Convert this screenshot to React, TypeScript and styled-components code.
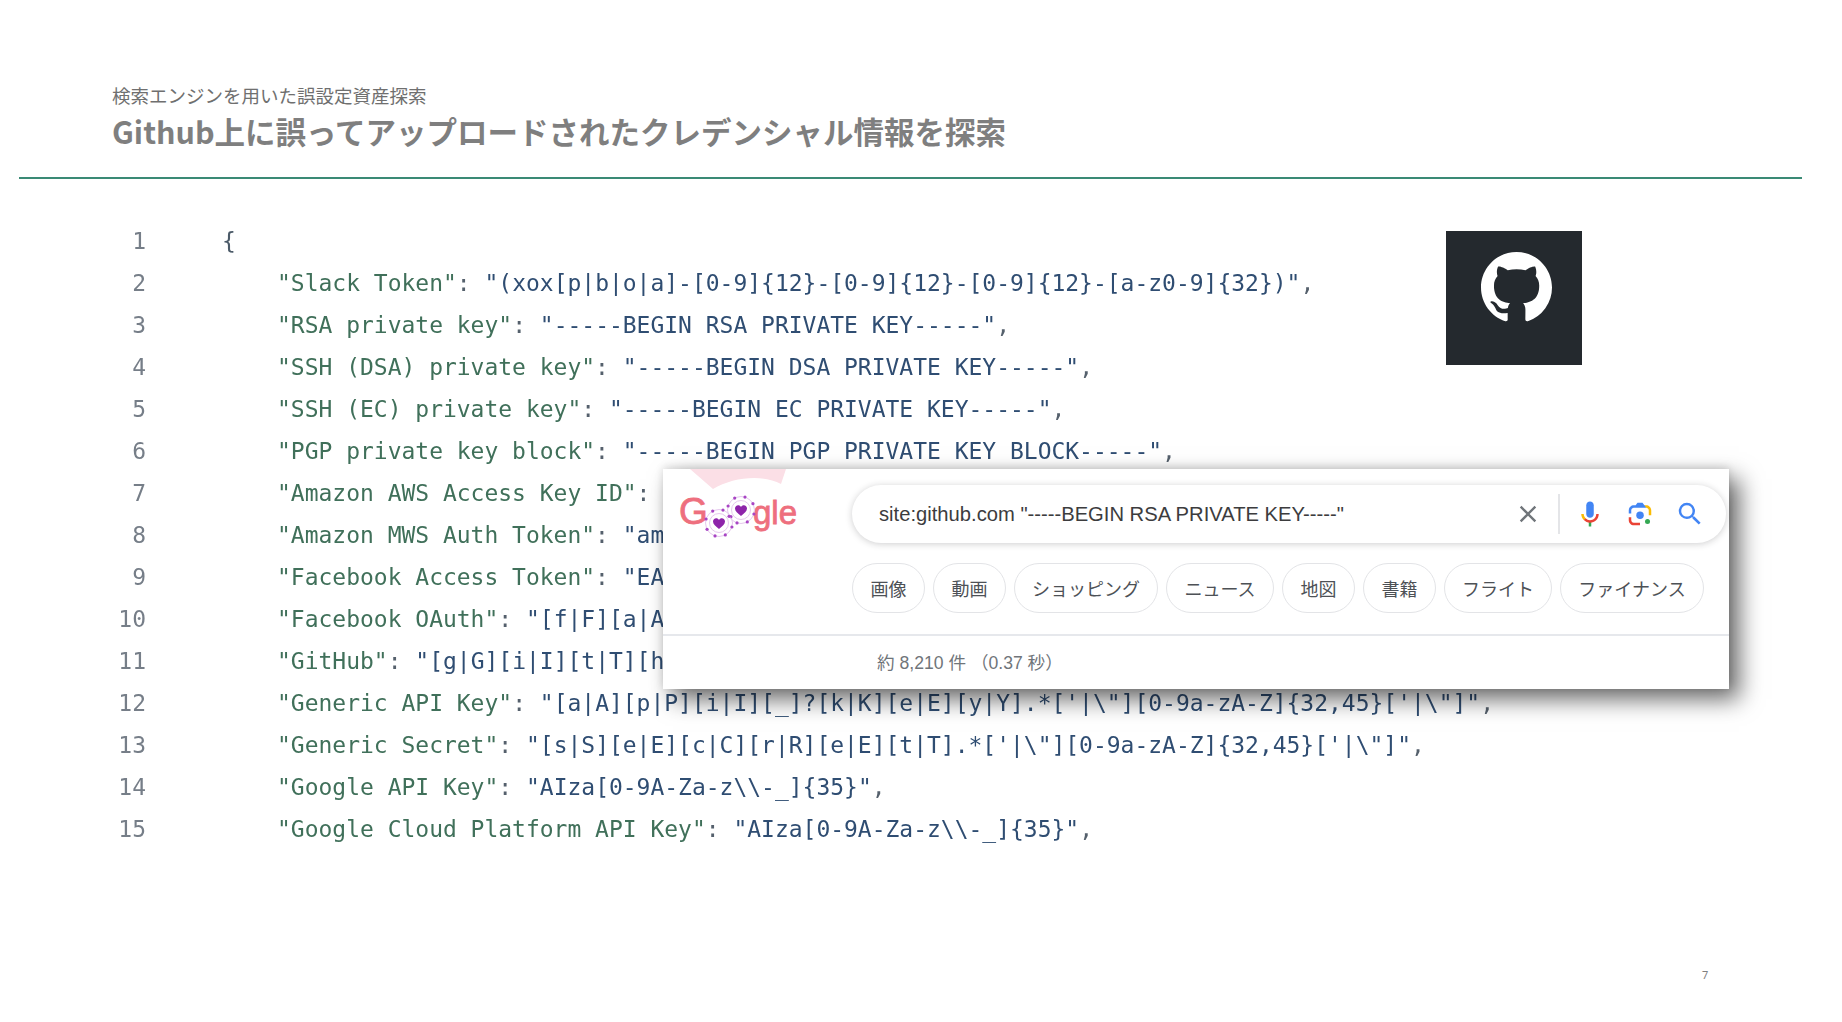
import React from "react";
import styled, { createGlobalStyle } from "styled-components";

const GlobalStyle = createGlobalStyle`
  html, body { margin: 0; padding: 0; background: #fff; }
  body { width: 1842px; height: 1022px; overflow: hidden; font-family: "Noto Sans CJK JP", "Noto Sans", sans-serif; }
`;

const Slide = styled.div`
  position: relative;
  width: 1842px;
  height: 1022px;
  background: #fff;
  overflow: hidden;
`;

const Header = styled.header`
  margin: 0 40px 0 19px;
  padding: 81px 0 0 93px;
  height: 96px;
  border-bottom: 2px solid #3a8a75;
`;

const Subtitle = styled.div`
  font-size: 18.5px;
  line-height: 28px;
  color: #6f6f6f;
  font-family: "Noto Sans CJK JP", sans-serif;
`;

const Title = styled.h1`
  margin: 0;
  font-size: 30.5px;
  line-height: 44px;
  font-weight: 700;
  color: #7f7f7f;
  font-family: "Noto Sans CJK JP", sans-serif;
`;

const CodeList = styled.div`
  margin-top: 41px;
  display: flex;
  flex-direction: column;
  filter: blur(0.35px);
`;

const CodeRow = styled.div`
  display: flex;
  height: 42px;
  align-items: center;
  font-family: "DejaVu Sans Mono", monospace;
  font-size: 22.98px;
  white-space: pre;
`;

const LineNo = styled.span`
  width: 146px;
  flex: none;
  text-align: right;
  color: #767e88;
`;

const CodeText = styled.span<{ $indent: number }>`
  margin-left: ${(p) => p.$indent}px;
  color: #4b5a68;
`;

const Key = styled.span`
  color: #40705a;
`;

const Punct = styled.span`
  color: #55606c;
`;

const Str = styled.span`
  color: #2f4d72;
`;

const GithubTile = styled.div`
  position: absolute;
  left: 1446px;
  top: 231px;
  width: 136px;
  height: 134px;
  background: #24292e;
  display: flex;
  justify-content: center;
  padding-top: 21px;
  box-sizing: border-box;
`;

const GithubSvg = styled.svg`
  width: 71px;
  height: 71px;
  fill: #fff;
  margin-left: 4px;
`;

const GooglePanel = styled.section`
  position: absolute;
  left: 663px;
  top: 469px;
  width: 1066px;
  height: 220px;
  background: #fff;
  box-shadow: 10px 10px 22px rgba(0, 0, 0, 0.6), 0 -2px 8px rgba(0, 0, 0, 0.12);
  display: flex;
  flex-direction: column;
`;

const TopArea = styled.div`
  position: relative;
  height: 167px;
  padding: 16px 3px 0 189px;
  box-sizing: border-box;
  border-bottom: 2px solid #e6e8ec;
  flex: none;
`;

const LogoSvg = styled.svg`
  position: absolute;
  left: 0;
  top: 0;
  width: 140px;
  height: 80px;
`;

const SearchBox = styled.div`
  height: 58px;
  border-radius: 29px;
  box-shadow: 0 1px 7px rgba(32, 33, 36, 0.22);
  display: flex;
  align-items: center;
  padding-left: 27px;
  background: #fff;
`;

const Query = styled.div`
  flex: 1;
  font-family: "Liberation Sans", Arial, sans-serif;
  font-size: 20.2px;
  color: #3c3c3e;
  white-space: pre;
`;

const IconSlot = styled.div<{ $w: number }>`
  width: ${(p) => p.$w}px;
  display: flex;
  justify-content: center;
  align-items: center;
  flex: none;
`;

const Separator = styled.div`
  width: 2px;
  height: 40px;
  background: #e4e5e8;
  flex: none;
  margin: 0 10px 0 0;
`;

const ChipRow = styled.div`
  display: flex;
  gap: 8px;
  margin-top: 20px;
`;

const Chip = styled.div<{ $w: number }>`
  width: ${(p) => p.$w}px;
  height: 50px;
  box-sizing: border-box;
  border: 1.5px solid #e3e4e7;
  border-radius: 25px;
  display: flex;
  align-items: center;
  justify-content: center;
  font-size: 18px;
  color: #4d5156;
  font-family: "Noto Sans CJK JP", sans-serif;
  white-space: nowrap;
`;

const ResultStats = styled.div`
  padding-left: 214px;
  margin-top: 14px;
  font-size: 17.6px;
  line-height: 26px;
  color: #70757a;
  font-family: "Liberation Sans", "Noto Sans CJK JP", sans-serif;
`;

const PageNo = styled.div`
  position: absolute;
  left: 1702px;
  top: 967px;
  font-size: 11px;
  line-height: 16px;
  color: #7f7f7f;
  font-family: "Noto Sans", sans-serif;
`;

const rows: [string, string][] = [
  ["Slack Token", `(xox[p|b|o|a]-[0-9]{12}-[0-9]{12}-[0-9]{12}-[a-z0-9]{32})`],
  ["RSA private key", `-----BEGIN RSA PRIVATE KEY-----`],
  ["SSH (DSA) private key", `-----BEGIN DSA PRIVATE KEY-----`],
  ["SSH (EC) private key", `-----BEGIN EC PRIVATE KEY-----`],
  ["PGP private key block", `-----BEGIN PGP PRIVATE KEY BLOCK-----`],
  ["Amazon AWS Access Key ID", `AKIA[0-9A-Z]{16}`],
  ["Amazon MWS Auth Token", `amzn\\.mws\\.[0-9a-f]{8}-[0-9a-f]{4}`],
  ["Facebook Access Token", `EAACEdEose0cBA[0-9A-Za-z]+`],
  ["Facebook OAuth", `[f|F][a|A][c|C][e|E][b|B][o|O][o|O][k|K].*['|\\"][0-9a-f]{32}['|\\"]`],
  ["GitHub", `[g|G][i|I][t|T][h|H][u|U][b|B].*['|\\"][0-9a-zA-Z]{35,40}['|\\"]`],
  ["Generic API Key", `[a|A][p|P][i|I][_]?[k|K][e|E][y|Y].*['|\\"][0-9a-zA-Z]{32,45}['|\\"]`],
  ["Generic Secret", `[s|S][e|E][c|C][r|R][e|E][t|T].*['|\\"][0-9a-zA-Z]{32,45}['|\\"]`],
  ["Google API Key", `AIza[0-9A-Za-z\\\\-_]{35}`],
  ["Google Cloud Platform API Key", `AIza[0-9A-Za-z\\\\-_]{35}`],
];

const chips: [string, number][] = [
  ["画像", 73],
  ["動画", 73],
  ["ショッピング", 144],
  ["ニュース", 108],
  ["地図", 73],
  ["書籍", 73],
  ["フライト", 108],
  ["ファイナンス", 144],
];

const Heart = ({ cx, cy }: { cx: number; cy: number }) => {
  const dots = Array.from({ length: 8 }, (_, i) => {
    const a = (i * Math.PI) / 4 + 0.3;
    return <circle key={i} cx={cx + Math.cos(a) * 13.5} cy={cy + Math.sin(a) * 13.5} r="1.6" fill="#a845c4" />;
  });
  return (
    <g>
      <circle cx={cx} cy={cy} r="13.5" fill="none" stroke="#e6c8ee" strokeWidth="1" />
      <circle cx={cx} cy={cy} r="9.5" fill="#fff" stroke="#e6c8ee" strokeWidth="1" />
      {dots}
      <path
        d={`M${cx} ${cy + 6}c-3.300-2.800-6-4.900-6-7.600 0-1.900 1.400-3.200 3.200-3.200 1.100 0 2.200 .6 2.800 1.800.6-1.200 1.700-1.800 2.800-1.800 1.800 0 3.200 1.300 3.200 3.200 0 2.700-2.700 4.800-6 7.600z`}
        fill="#8e24aa"
      />
    </g>
  );
};

export default function App() {
  return (
    <Slide>
      <GlobalStyle />
      <Header>
        <Subtitle>検索エンジンを用いた誤設定資産探索</Subtitle>
        <Title>Github上に誤ってアップロードされたクレデンシャル情報を探索</Title>
      </Header>

      <CodeList>
        <CodeRow>
          <LineNo>1</LineNo>
          <CodeText $indent={76}>{"{"}</CodeText>
        </CodeRow>
        {rows.map(([k, v], i) => (
          <CodeRow key={k}>
            <LineNo>{i + 2}</LineNo>
            <CodeText $indent={131}>
              <Key>"{k}"</Key>
              <Punct>: </Punct>
              <Str>"{v}"</Str>
              <Punct>,</Punct>
            </CodeText>
          </CodeRow>
        ))}
      </CodeList>

      <GithubTile>
        <GithubSvg viewBox="0 0 16 16">
          <path d="M8 0C3.58 0 0 3.58 0 8c0 3.54 2.29 6.53 5.47 7.59.4.07.55-.17.55-.38 0-.19-.01-.82-.01-1.49-2.01.37-2.53-.49-2.69-.94-.09-.23-.48-.94-.82-1.13-.28-.15-.68-.52-.01-.53.63-.01 1.08.58 1.23.82.72 1.21 1.87.87 2.33.66.07-.52.28-.87.51-1.07-1.78-.2-3.64-.89-3.64-3.95 0-.87.31-1.59.82-2.15-.08-.2-.36-1.02.08-2.12 0 0 .67-.21 2.2.82.64-.18 1.32-.27 2-.27.68 0 1.36.09 2 .27 1.53-1.04 2.2-.82 2.2-.82.44 1.1.16 1.92.08 2.12.51.56.82 1.27.82 2.15 0 3.07-1.87 3.75-3.65 3.95.29.25.54.73.54 1.48 0 1.07-.01 1.93-.01 2.2 0 .21.15.46.55.38A8.013 8.013 0 0 0 16 8c0-4.42-3.58-8-8-8z" />
        </GithubSvg>
      </GithubTile>

      <GooglePanel>
        <TopArea>
          <LogoSvg viewBox="0 0 140 80">
            <path d="M27 0 L50 20 C70 8 100 5 118 15 L123 0 Z" fill="#fbdfe6" />
            <text x="16" y="55" fontFamily="'Liberation Sans', sans-serif" fontSize="37" fill="#ee6f7e" stroke="#ee6f7e" strokeWidth="0.8">G</text>
            <text x="90" y="55" fontFamily="'Liberation Sans', sans-serif" fontSize="33" fill="#ee6f7e" stroke="#ee6f7e" strokeWidth="0.8">gle</text>
            <Heart cx={56} cy={54} />
            <Heart cx={78} cy={41} />
          </LogoSvg>
          <SearchBox>
            <Query>site:github.com "-----BEGIN RSA PRIVATE KEY-----"</Query>
            <IconSlot $w={30}>
              <svg width="28" height="28" viewBox="0 0 24 24" fill="#70757a">
                <path d="M19 6.41L17.59 5 12 10.59 6.41 5 5 6.41 10.59 12 5 17.59 6.41 19 12 13.41 17.59 19 19 17.59 13.41 12z" />
              </svg>
            </IconSlot>
            <IconSlot $w={15} />
            <Separator />
            <IconSlot $w={40}>
              <svg width="30" height="30" viewBox="0 0 24 24">
                <path fill="#4285f4" d="m12 15c1.660 0 3-1.310 3-2.970v-7.020c0-1.660-1.340-3.010-3-3.010s-3 1.340-3 3.010v7.020c0 1.660 1.340 2.970 3 2.970z" />
                <path fill="#34a853" d="m11 18.080h2v3.920h-2z" />
                <path fill="#fbbc04" d="m7.050 16.870c-1.270-1.330-2.050-2.830-2.050-4.870h2c0 1.450 0.560 2.420 1.470 3.380v0.320l-1.150 1.180z" />
                <path fill="#ea4335" d="m12 16.930a4.970 5.250 0 0 1 -3.540 -1.550l-1.410 1.490c1.260 1.340 3.020 2.130 4.950 2.130 3.870 0 6.990-2.920 6.990-7h-1.990c0 2.920-2.240 4.930-5 4.930z" />
              </svg>
            </IconSlot>
            <IconSlot $w={10} />
            <IconSlot $w={40}>
              <svg width="30" height="30" viewBox="0 0 192 192">
                <circle fill="#34a853" cx="144.07" cy="144" r="16" />
                <circle fill="#4285f4" cx="96.07" cy="104" r="24" />
                <path fill="#ea4335" d="M24,135.2c0,18.11,14.69,32.8,32.8,32.8H96v-16l-40.1-0.1c-8.8,0-15.9-8.19-15.9-17.9v-18H24V135.2z" />
                <path fill="#fbbc04" d="M168,72.8c0-18.11-14.69-32.8-32.8-32.8H116l20,16c8.8,0,16,8.29,16,18v30h16V72.8z" />
                <path fill="#4285f4" d="M112,24l-32,0L68,40H56.8C38.69,40,24,54.69,24,72.8V92h16V74c0-9.71,7.2-18,16-18h80L112,24z" />
              </svg>
            </IconSlot>
            <IconSlot $w={10} />
            <IconSlot $w={40}>
              <svg width="30" height="30" viewBox="0 0 24 24" fill="#4285f4">
                <path d="M15.5 14h-.79l-.28-.27A6.471 6.471 0 0 0 16 9.5 6.5 6.5 0 1 0 9.5 16c1.610 0 3.090-.59 4.230-1.570l.27.28v.79l5 4.990L20.490 19l-4.990-5zm-6 0C7.010 14 5 11.990 5 9.500S7.010 5 9.500 5 14 7.010 14 9.500 11.990 14 9.500 14z" />
              </svg>
            </IconSlot>
            <IconSlot $w={16} />
          </SearchBox>
          <ChipRow>
            {chips.map(([t, w]) => (
              <Chip key={t} $w={w}>{t}</Chip>
            ))}
          </ChipRow>
        </TopArea>
        <ResultStats>約 8,210 件 （0.37 秒）</ResultStats>
      </GooglePanel>

      <PageNo>7</PageNo>
    </Slide>
  );
}
